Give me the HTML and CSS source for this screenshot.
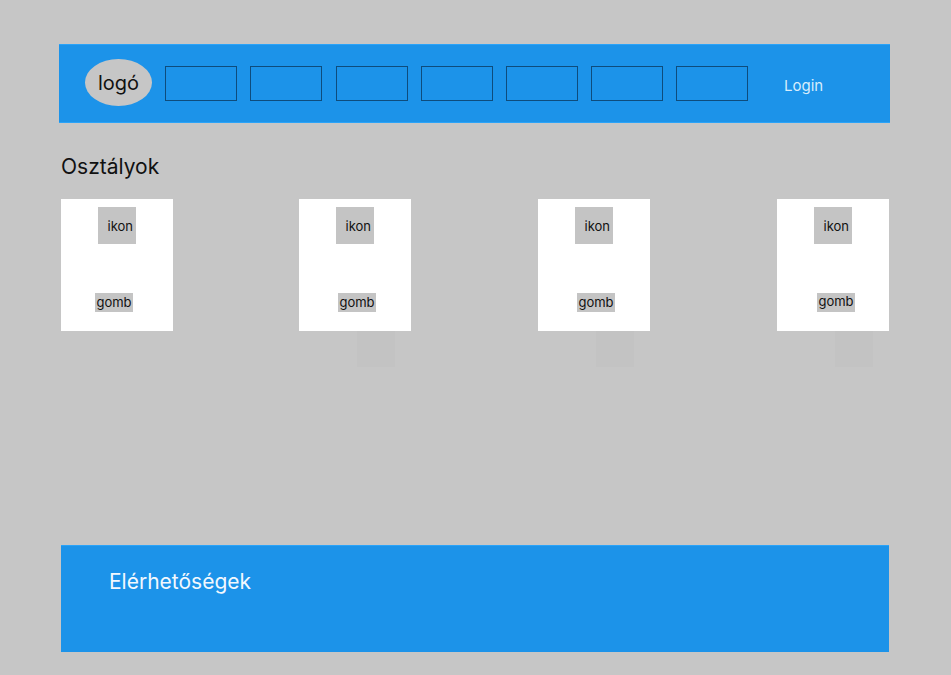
FILE: index.html
```html
<!DOCTYPE html>
<html lang="hu">
<head>
<meta charset="utf-8">
<title>Osztályok</title>
<link rel="stylesheet" href="styles.css">
</head>
<body>
<div class="page">
  <header class="topbar">
    <div class="logo">logó</div>
    <nav class="nav">
      <span class="nav-box"></span>
      <span class="nav-box"></span>
      <span class="nav-box"></span>
      <span class="nav-box"></span>
      <span class="nav-box"></span>
      <span class="nav-box"></span>
      <span class="nav-box"></span>
    </nav>
    <a class="login">Login</a>
  </header>

  <main class="content">
    <h1 class="title">Osztályok</h1>
    <div class="cards">
      <div class="card">
        <div class="icon">ikon</div>
        <div class="btn btn-1">gomb</div>
      </div>
      <div class="card">
        <div class="icon">ikon</div>
        <div class="btn">gomb</div>
        <div class="ghost"></div>
      </div>
      <div class="card">
        <div class="icon">ikon</div>
        <div class="btn">gomb</div>
        <div class="ghost"></div>
      </div>
      <div class="card">
        <div class="icon">ikon</div>
        <div class="btn btn-4">gomb</div>
        <div class="ghost"></div>
      </div>
    </div>
  </main>

  <footer class="footer">
    <div class="footer-title">Elérhetőségek</div>
  </footer>
</div>
</body>
</html>
```
FILE: styles.css
```css
html, body {
  margin: 0;
  padding: 0;
}
body {
  background: #c6c6c6;
  font-family: Inter, "Noto Sans", "Liberation Sans", sans-serif;
  color: #111;
}
.page {
  width: 951px;
  height: 675px;
  padding-top: 44px;
  box-sizing: border-box;
}
.topbar {
  margin-left: 59px;
  width: 831px;
  height: 79px;
  box-sizing: border-box;
  background: #1c93e9;
  border-top: 1px solid #2aa3f8;
  border-bottom: 1px solid #2aa3f8;
  display: flex;
  align-items: center;
  padding-left: 26px;
}
.logo {
  width: 67px;
  height: 47px;
  border-radius: 50%;
  background: #c6c6c6;
  display: flex;
  align-items: center;
  justify-content: center;
  font-size: 20px;
  color: #111;
  margin-top: -2px;
}
.nav {
  display: flex;
  gap: 13px;
  margin-left: 13px;
}
.nav-box {
  width: 72px;
  height: 35px;
  box-sizing: border-box;
  border: 1px solid #0e4c7c;
}
.nav-box:nth-child(n+3) {
  margin-left: 1px;
}
.nav-box:nth-child(n+4) {
  margin-left: 0;
}
.login {
  margin-left: 36px;
  font-size: 15px;
  color: #d8edfc;
  margin-top: 3px;
}
.content {
  margin-left: 61px;
  width: 828px;
}
.title {
  margin: 0;
  padding-top: 31px;
  font-size: 21px;
  line-height: 25px;
  font-weight: 400;
  color: #111;
}
.cards {
  display: flex;
  justify-content: space-between;
  margin-top: 20px;
}
.card {
  position: relative;
  width: 112px;
  height: 132px;
  background: #fff;
  display: flex;
  flex-direction: column;
  padding-top: 8px;
  padding-left: 37px;
  box-sizing: border-box;
}
.card:nth-child(2) {
  margin-left: -1px;
}
.icon {
  width: 38px;
  height: 37px;
  background: #c4c4c4;
  font-size: 13px;
  line-height: 39px;
  text-align: right;
  padding-right: 3px;
  box-sizing: border-box;
}
.btn {
  margin-top: 49px;
  margin-left: 2px;
  width: 38px;
  height: 19px;
  background: #c4c4c4;
  font-size: 13px;
  line-height: 19px;
  text-align: center;
  align-self: flex-start;
}
.btn-1 {
  margin-left: -3px;
}
.btn-4 {
  margin-left: 3px;
  line-height: 16px;
}
.ghost {
  position: absolute;
  left: 58px;
  top: 132px;
  width: 38px;
  height: 36px;
  background: #c3c3c3;
}
.footer {
  margin-top: 214px;
  margin-left: 61px;
  width: 828px;
  height: 107px;
  box-sizing: border-box;
  background: #1c93e9;
  border-top: 1px solid #2aa3f8;
  padding-top: 22px;
  padding-left: 48px;
}
.footer-title {
  font-size: 21px;
  line-height: 27px;
  color: #f2f8fe;
}
```
